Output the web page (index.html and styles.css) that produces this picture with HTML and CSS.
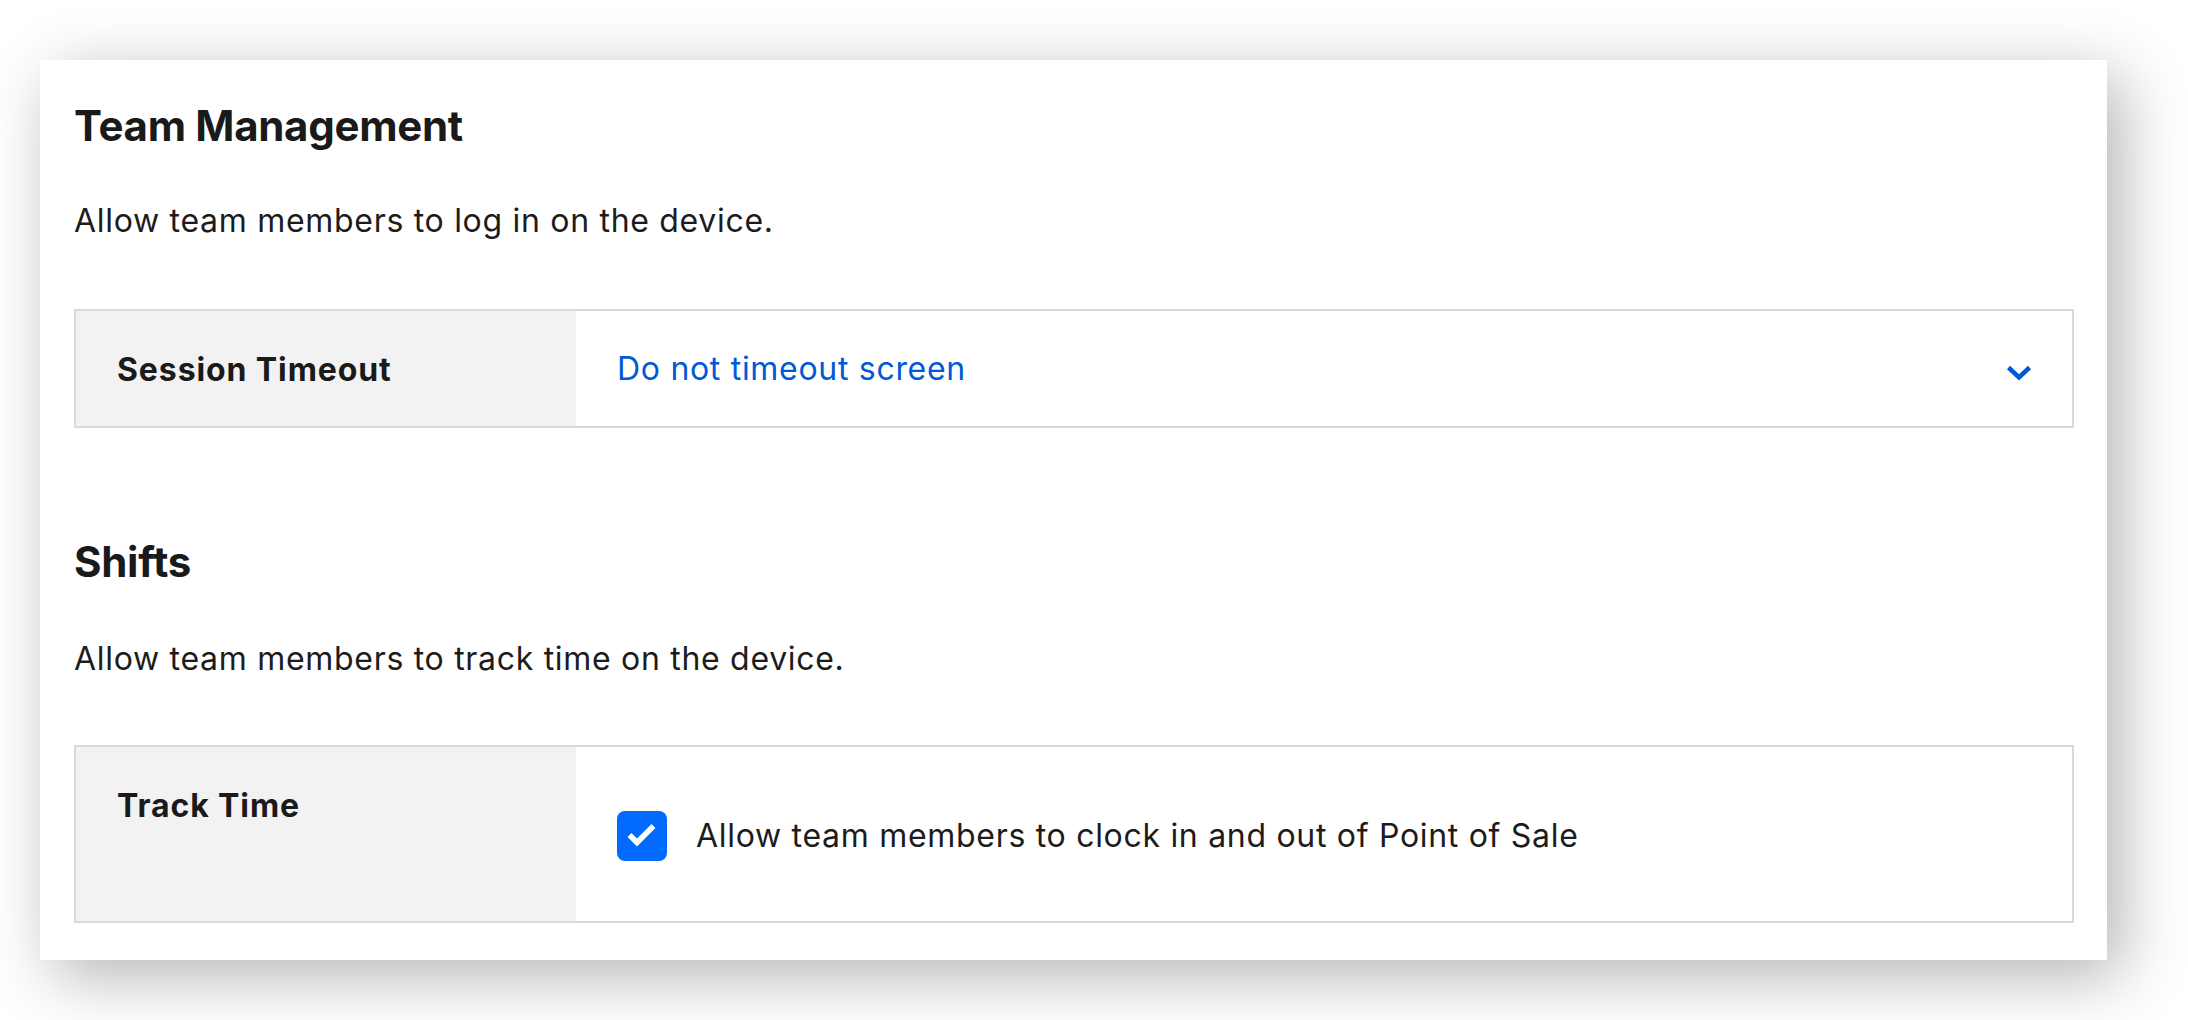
FILE: index.html
```html
<!DOCTYPE html>
<html lang="en">
<head>
<meta charset="utf-8">
<title>Team Management</title>
<link rel="stylesheet" href="styles.css">
</head>
<body>
<div class="page">
  <section class="card">
    <h2 class="title">Team Management</h2>
    <p class="desc">Allow team members to log in on the device.</p>
    <div class="table">
      <div class="label">Session Timeout</div>
      <div class="value select">
        <span class="select-text">Do not timeout screen</span>
        <svg class="chevron" viewBox="0 0 26 16" width="26" height="16" aria-hidden="true">
          <path d="M2.5 2.5 L13 12.5 L23.5 2.5" fill="none" stroke="#0059d6" stroke-width="4.5" stroke-linecap="butt" stroke-linejoin="miter"/>
        </svg>
      </div>
    </div>

    <h2 class="title title-second">Shifts</h2>
    <p class="desc desc-second">Allow team members to track time on the device.</p>
    <div class="table table-tall">
      <div class="label">Track Time</div>
      <div class="value check-row">
        <span class="checkbox">
          <svg viewBox="0 0 50 50" width="50" height="50" aria-hidden="true">
            <path d="M12.5 24 L20 31.5 L36.5 15" fill="none" stroke="#ffffff" stroke-width="5.5" stroke-linecap="butt" stroke-linejoin="miter"/>
          </svg>
        </span>
        <span class="check-text">Allow team members to clock in and out of Point of Sale</span>
      </div>
    </div>
  </section>
</div>
</body>
</html>
```

FILE: styles.css
```css
* { box-sizing: border-box; }

html, body {
  margin: 0;
  padding: 0;
  background: #ffffff;
}

body {
  font-family: Inter, "Noto Sans", "Liberation Sans", sans-serif;
  color: #1c1c1c;
}

.page {
  padding: 60px 0 60px 40px;
  min-height: 1020px;
}

.card {
  width: 2067px;
  height: 900px;
  background: #ffffff;
  padding: 42px 33px 36px 34px;
  box-shadow: 14px 16px 62px rgba(0, 0, 0, 0.3);
}

.title {
  margin: 0;
  font-size: 42px;
  line-height: 48px;
  font-weight: 700;
  letter-spacing: -0.3px;
  color: #1a1a1a;
}

.title-second {
  margin-top: 110px;
}

.desc {
  margin: 51px 0 0 0;
  font-size: 32px;
  line-height: 40px;
  font-weight: 400;
  letter-spacing: 0.7px;
  color: #1c1c1c;
}

.desc-second {
  margin-top: 53px;
}

.table {
  margin-top: 68px;
  display: flex;
  border: 2px solid #d9d9d9;
}

.desc-second + .table {
  margin-top: 66px;
}

.label {
  flex: 0 0 500px;
  background: #f2f2f2;
  padding: 39px 20px 36px 41px;
  font-size: 32px;
  line-height: 40px;
  font-weight: 700;
  letter-spacing: 0.9px;
  color: #1a1a1a;
}

.value {
  flex: 1 1 auto;
  display: flex;
  align-items: center;
  padding: 0 40px 0 41px;
  font-size: 32px;
  line-height: 40px;
  letter-spacing: 0.7px;
}

.select {
  justify-content: space-between;
}

.select-text {
  color: #0059d6;
}

.chevron {
  display: block;
  margin-top: 8px;
}

.table-tall {
  height: 178px;
}

.check-row {
  gap: 29px;
  padding-top: 3px;
}

.checkbox {
  flex: 0 0 50px;
  width: 50px;
  height: 50px;
  border-radius: 8px;
  background: #006aff;
  display: flex;
  align-items: center;
  justify-content: center;
}

.checkbox svg {
  display: block;
}

.check-text {
  color: #1c1c1c;
}
```
